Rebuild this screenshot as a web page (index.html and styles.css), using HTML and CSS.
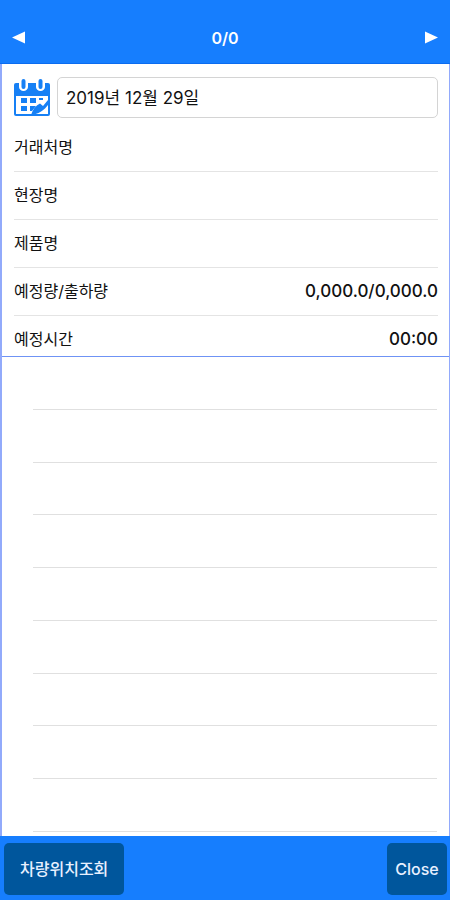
FILE: index.html
```html
<!DOCTYPE html>
<html lang="ko">
<head>
<meta charset="utf-8">
<meta name="viewport" content="width=device-width, initial-scale=1">
<title>0/0</title>
<link rel="stylesheet" href="styles.css">
</head>
<body>
<header class="topbar">
  <button class="arrow" type="button" aria-label="이전">
    <svg width="13" height="13" viewBox="0 0 13 13"><path d="M0 6.5 13 .5v12z" fill="currentColor"/></svg>
  </button>
  <h1 class="count">0/0</h1>
  <button class="arrow" type="button" aria-label="다음">
    <svg width="13" height="13" viewBox="0 0 13 13"><path d="M13 6.5 0 .5v12z" fill="currentColor"/></svg>
  </button>
</header>
<main class="content">
  <section class="details">
    <div class="date-row">
      <label class="date-icon" for="date" aria-label="날짜">
        <svg width="36" height="38" viewBox="0 0 36 38">
          <path d="M2 4H34Q36 4 36 6V35Q36 37 34 37H2Q0 37 0 35V6Q0 4 2 4Z" fill="#1680f5"/>
          <path d="M2 17H34V35H2Z" fill="#fff"/>
          <path d="M5 3V8a4.500 4 0 0 0 9 0V3ZM22 3V8a4.500 4 0 0 0 9 0V3Z" fill="#fff"/>
          <path d="M9.500 2V8M26.500 2V8" stroke="#1680f5" stroke-width="4" stroke-linecap="round"/>
          <path d="M7 19h6v5H7zM16 19h6v5h-6zM25 19h4v2h-4zM7 27h6v5H7zM16 27h6l-4 5h-2z" fill="#1680f5"/>
          <path d="M17 36Q20 27 26 24.500L29 27 34 21V26L31 29.500Q25 35 17 36Z" fill="#1680f5"/>
        </svg>
      </label>
      <input class="date-input" id="date" type="text" value="2019년 12월 29일">
    </div>
    <dl class="fields">
      <div class="field"><dt>거래처명</dt><dd></dd></div>
      <div class="field"><dt>현장명</dt><dd></dd></div>
      <div class="field"><dt>제품명</dt><dd></dd></div>
      <div class="field"><dt>예정량/출하량</dt><dd>0,000.0/0,000.0</dd></div>
      <div class="field"><dt>예정시간</dt><dd>00:00</dd></div>
    </dl>
  </section>
  <ul class="list">
    <li></li><li></li><li></li><li></li><li></li><li></li><li></li><li></li><li></li>
  </ul>
</main>
<footer class="bottombar">
  <button class="action" type="button">차량위치조회</button>
  <button class="action action-close" type="button">Close</button>
</footer>
</body>
</html>
```
FILE: styles.css
```css
* {
  box-sizing: border-box;
}

body {
  margin: 0;
  min-height: 100vh;
  display: flex;
  flex-direction: column;
  background: #fff;
  color: #111;
  font: 16px/24px Inter, "Noto Sans CJK KR", sans-serif;
}

button,
input {
  font: inherit;
}

.topbar {
  display: flex;
  align-items: center;
  justify-content: space-between;
  height: 64px;
  padding: 12px 12px 0;
  background: #167efe;
  border-bottom: 1px solid #0b6cf0;
  color: #fff;
}

.arrow {
  display: flex;
  padding: 8px 0;
  border: 0;
  background: none;
  color: inherit;
}

.count {
  margin: 0;
  font-size: 16px;
  font-weight: 600;
}

.content {
  flex: 1;
  display: flex;
  flex-direction: column;
  border: solid #92aafb;
  border-width: 0 1px 0 2px;
}

.details {
  padding: 13px 11px 0 12px;
  border-bottom: 1px solid #6f93f5;
}

.date-row {
  display: flex;
  align-items: center;
  gap: 7px;
  margin-bottom: 6px;
}

.date-icon {
  display: flex;
}

.date-input {
  flex: 1;
  min-width: 0;
  height: 41px;
  padding: 0 8px 2px;
  border: 1px solid #d4d4d4;
  border-radius: 5px;
  background: #fff;
  color: #111;
  font-size: 17px;
}

.fields {
  margin: 0;
}

.field {
  display: flex;
  align-items: center;
  justify-content: space-between;
  height: 48px;
  padding-bottom: 1px;
  border-bottom: 1px solid #e4e4e4;
}

.field:last-child {
  height: 40px;
  align-items: flex-start;
  padding: 11px 0 0;
  border-bottom: 0;
}

.field dd {
  margin: 0;
  font-size: 17px;
  font-weight: 500;
}

.list {
  flex: 1;
  display: flex;
  flex-direction: column;
  margin: 0;
  padding: 0 12px 4px 31px;
  list-style: none;
}

.list li {
  flex: 1;
  border-bottom: 1px solid #e0e0e0;
}

.bottombar {
  display: flex;
  justify-content: space-between;
  height: 64px;
  padding: 7px 3px 5px 4px;
  background: #167efe;
}

.action {
  padding: 0 16px;
  border: 0;
  border-radius: 5px;
  background: #00569c;
  color: #e8f0ff;
  font-weight: 500;
}

.action-close {
  min-width: 60px;
  padding: 0 8px;
}
```
